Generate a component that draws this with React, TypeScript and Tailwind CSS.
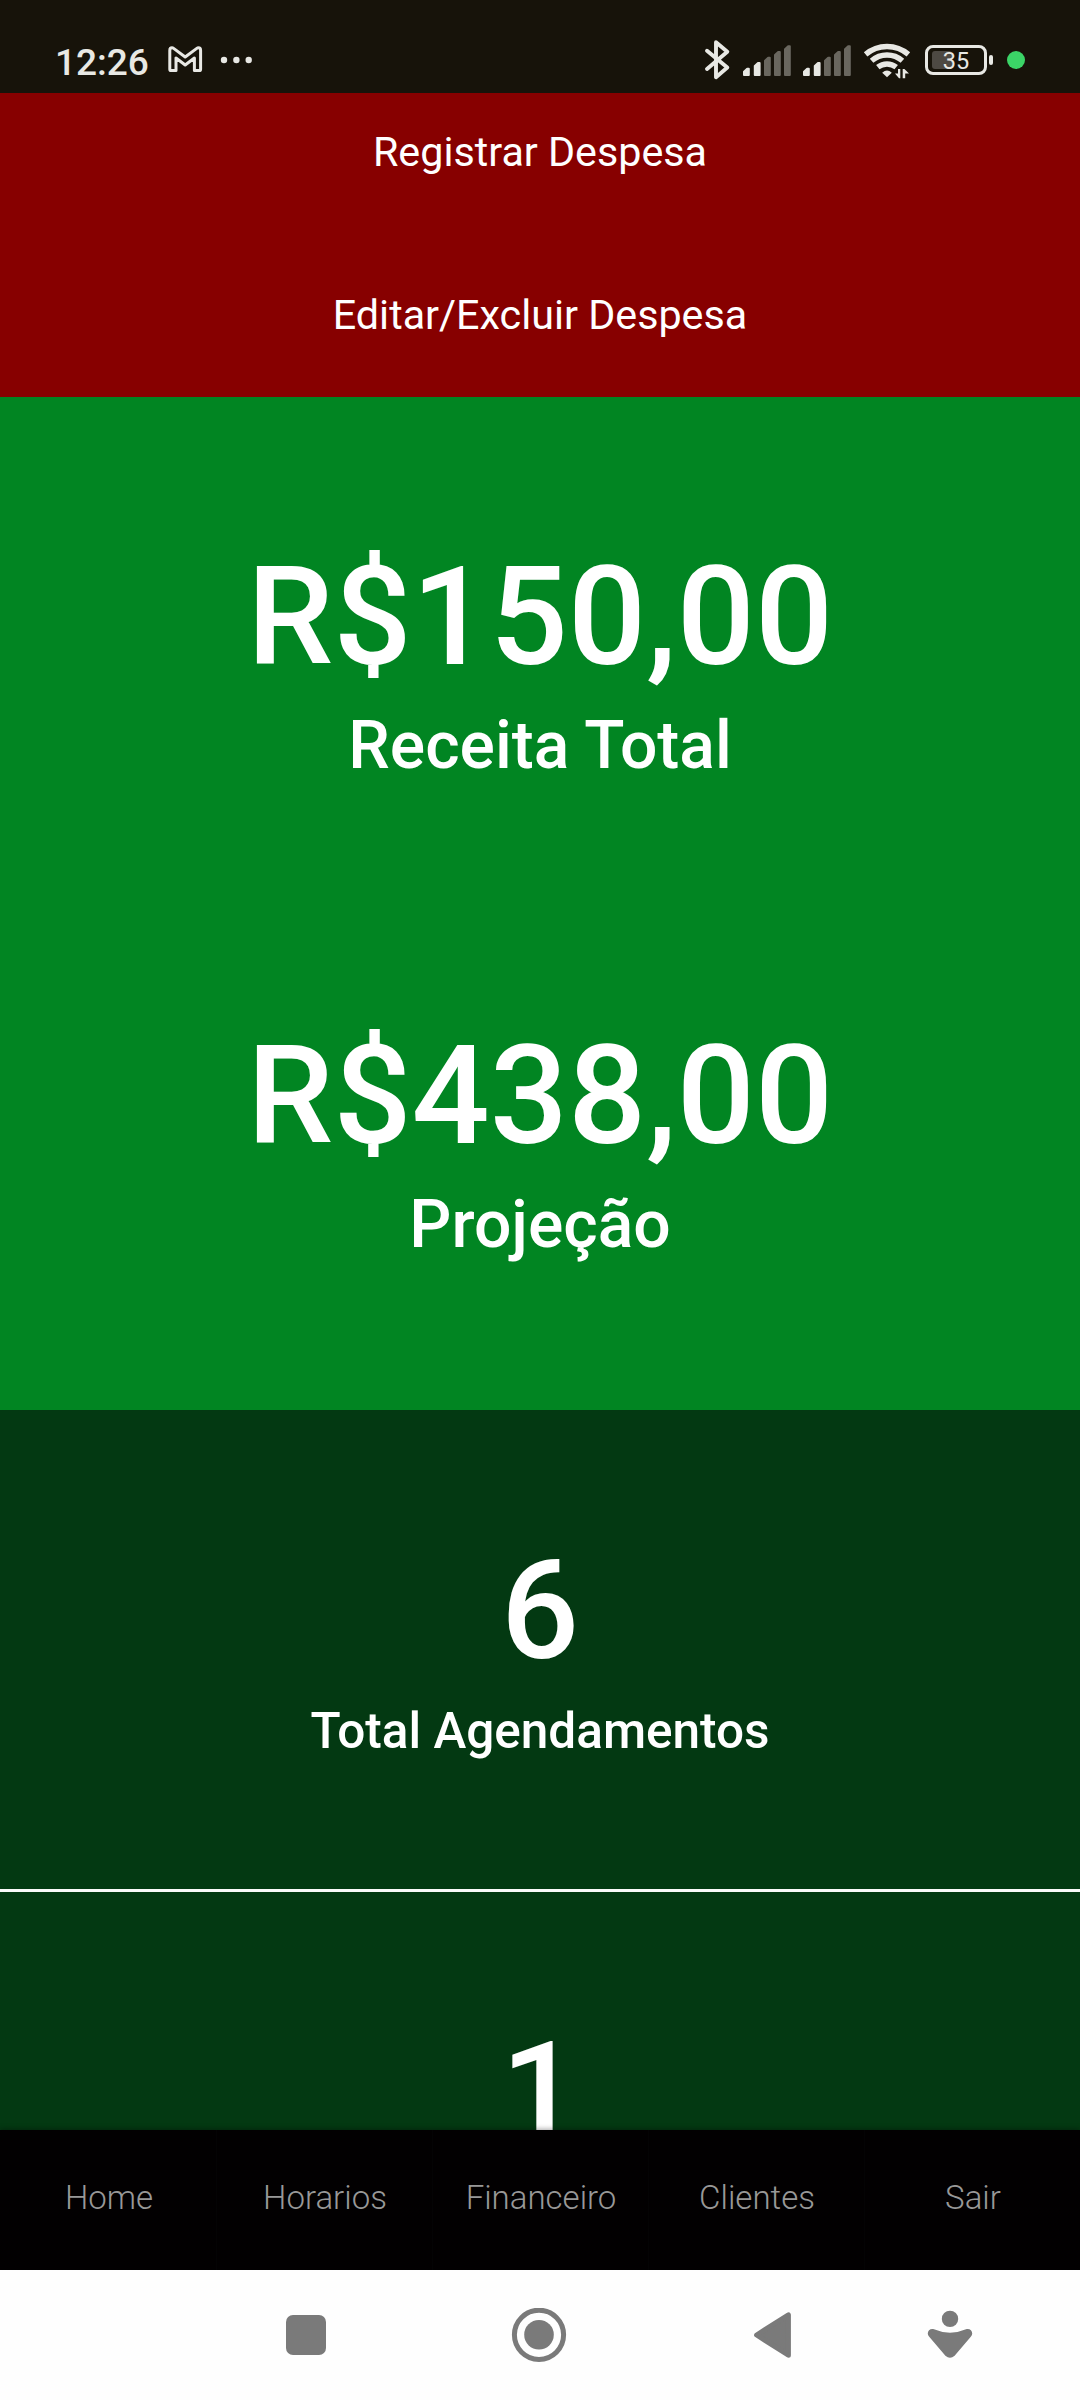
const ICON = '#e8e8e4';
const DIM = '#6a675f';

// Status bar icons share one vertical band (y 40..80) so they line up in the row.
function MailIcon() {
  return (
    <svg className="ml-[16px] h-10 w-[36px] shrink-0" viewBox="167 40 36 40" fill="none" stroke={ICON} strokeWidth="3" strokeLinejoin="round">
      <path d="M171.2 70.6 Q169.8 70.6 169.8 69.2 V50.4 Q169.8 47.8 172 47.8 Q172.8 47.8 173.6 48.4 L185.2 57 L196.8 48.4 Q197.6 47.8 198.4 47.8 Q200.6 47.8 200.6 50.4 V69.2 Q200.6 70.6 199.2 70.6 H194.4 V58 L185.2 65 L176 58 V70.6 Z" />
    </svg>
  );
}

function MoreDots() {
  return (
    <svg className="ml-[17px] h-10 w-[34px] shrink-0" viewBox="220 40 34 40" fill={ICON}>
      <circle cx="224" cy="60" r="3.2" />
      <circle cx="236.4" cy="60" r="3.2" />
      <circle cx="248.7" cy="60" r="3.2" />
    </svg>
  );
}

function BluetoothIcon() {
  return (
    <svg className="h-10 w-[28px] shrink-0" viewBox="703 40 28 40" fill="none" stroke={ICON} strokeWidth="3.9" strokeLinecap="round" strokeLinejoin="round">
      <path d="M707 50.8 L727.3 67.6 L716 77.2 V42.2 L727.3 51.8 L707 69" />
    </svg>
  );
}

const BARS = [
  { x: 0, top: 67.5 },
  { x: 10.8, top: 61.8 },
  { x: 21, top: 56.5 },
  { x: 31, top: 50.8 },
  { x: 41, top: 45 },
];

function SignalIcon() {
  return (
    <svg className="ml-[12px] h-10 w-[48px] shrink-0" viewBox="0 40 48 40" strokeWidth="2" strokeLinejoin="round">
      {BARS.map((b, i) => (
        <path
          key={b.x}
          d={`M${b.x + 1} ${b.top + 4.2} L${b.x + 4.2} ${b.top + 1.2} H${b.x + 5.8} V75 H${b.x + 1} Z`}
          fill={i < 2 ? ICON : DIM}
          stroke={i < 2 ? ICON : DIM}
        />
      ))}
    </svg>
  );
}

function WifiIcon() {
  return (
    <svg className="ml-[12px] h-10 w-[48px] shrink-0" viewBox="863 40 48 40" fill="none" stroke={ICON} strokeWidth="5.4">
      <path d="M865.6 54.4 A32.8 32.8 0 0 1 908.4 54.4" />
      <path d="M871.6 60.8 A23.4 23.4 0 0 1 902.4 60.8" />
      <path d="M877.8 67.2 A14.6 14.6 0 0 1 896.2 67.2" />
      <path d="M882.2 72.8 Q887 68.4 891.8 72.8 L887 77.2 Z" fill={ICON} stroke="none" />
      <path d="M898 69 H900.3 V78.3 H899 L895 73.6 H898 Z" fill={ICON} stroke="none" />
      <path d="M905.2 78.3 H902.7 V69 H904.4 L909 73.6 H905.2 Z" fill={ICON} stroke="none" />
    </svg>
  );
}

function BatteryIcon() {
  return (
    <div className="ml-[14px] mt-[5px] flex shrink-0 items-center gap-[2px]">
      <div className="relative flex h-[30px] w-[62px] items-center justify-center rounded-[8px] border-3 border-[#e8e8e4]">
        <div className="absolute left-[4px] top-[3px] h-[18px] w-[20px] rounded-[3px] bg-[#4d4943]" />
        <span className="relative top-px text-[23.5px] leading-[24px] text-[#e8e8e4]">35</span>
      </div>
      <div className="h-[10px] w-[4px] rounded-[2px] bg-[#e8e8e4]" />
    </div>
  );
}

function StatusBar() {
  return (
    <header className="flex h-[93px] shrink-0 items-start bg-[#17130a] pt-10">
      <span className="mt-px ml-[55px] w-[96px] text-[37px] leading-[44px] font-medium whitespace-nowrap text-[#e8e8e4]">12:26</span>
      <MailIcon />
      <MoreDots />
      <div className="ml-auto flex items-start">
        <BluetoothIcon />
        <SignalIcon />
        <SignalIcon />
        <WifiIcon />
        <BatteryIcon />
        <div className="mt-[11px] mr-[55px] ml-[14px] size-[18px] rounded-full bg-[#3bd467]" />
      </div>
    </header>
  );
}

function Expenses() {
  return (
    <section className="flex h-[304px] shrink-0 flex-col items-center gap-[115px] bg-[#870000] pt-[35px] text-[41.25px] leading-[48px]">
      <button>Registrar Despesa</button>
      <button>Editar/Excluir Despesa</button>
    </section>
  );
}

function RevenueCard({ value, label }: { value: string; label: string }) {
  return (
    <div className="flex h-[479px] flex-col items-center gap-[9px] pt-[140px] font-medium">
      <p className="text-[137.5px] leading-[160px]">{value}</p>
      <p className="text-[66px] leading-[80px]">{label}</p>
    </div>
  );
}

function CountCard({ value, label }: { value: string; label: string }) {
  return (
    <div className="flex h-[482px] shrink-0 flex-col items-center gap-[10px] border-b-3 border-[#fafafa] pt-[121px] font-medium">
      <p className="text-[137.5px] leading-[160px]">{value}</p>
      <p className="text-[49.5px] leading-[60px]">{label}</p>
    </div>
  );
}

const TABS = ['Home', 'Horarios', 'Financeiro', 'Clientes', 'Sair'];

function TabBar() {
  return (
    <nav className="relative grid h-[140px] shrink-0 grid-cols-5 bg-[#020001] text-[33px] leading-[40px] font-light text-[#989898] shadow-[0_-1px_5px_rgba(0,0,0,0.35)]">
      {TABS.map((t) => (
        <button key={t} className="border-l border-[#040304] pt-[48px] pb-[52px] pl-px first:border-l-transparent">
          {t}
        </button>
      ))}
    </nav>
  );
}

function SystemNav() {
  return (
    <footer className="relative flex h-[130px] shrink-0 items-start bg-[#fefefe] pt-[38px] text-[#7a7a7a]">
      <div className="mt-[7px] ml-[286px] size-[40px] rounded-[7px] bg-current" />
      <svg className="ml-[185px] h-[56px] w-[58px]" viewBox="510 2308 58 56" fill="currentColor">
        <circle cx="538" cy="2334.8" r="24.6" fill="none" stroke="currentColor" strokeWidth="5" />
        <circle cx="538" cy="2334.8" r="14.8" />
      </svg>
      <svg className="ml-[182px] h-[56px] w-[44px]" viewBox="750 2308 44 56" fill="currentColor" stroke="currentColor" strokeWidth="5" strokeLinejoin="round">
        <path d="M755.6 2335 L787.4 2314.8 V2355.2 Z" />
      </svg>
      <svg className="ml-[131px] h-[56px] w-[48px]" viewBox="926 2308 48 56" fill="currentColor">
        <circle cx="950" cy="2318.9" r="8.2" />
        <path d="M934 2329.3 Q950 2336.2 966 2329.3 C970.6 2327.8 974.2 2332.6 971 2336.6 L954.6 2355.8 Q950 2359.8 945.4 2355.8 L929 2336.6 C925.8 2332.6 929.4 2327.8 934 2329.3 Z" />
      </svg>
    </footer>
  );
}

export default function App() {
  return (
    <div className="flex h-[2400px] w-[1080px] flex-col overflow-hidden bg-[#033912] font-['Roboto',sans-serif] text-white">
      <StatusBar />
      <Expenses />
      <section className="h-[1013px] shrink-0 bg-[#018522]">
        <RevenueCard value="R$150,00" label="Receita Total" />
        <RevenueCard value="R$438,00" label="Projeção" />
      </section>
      <section className="flex h-[720px] shrink-0 flex-col overflow-hidden bg-[#033912]">
        <CountCard value="6" label="Total Agendamentos" />
        <div className="flex justify-center pt-[120px] font-medium">
          <p className="text-[137.5px] leading-[160px]">1</p>
        </div>
      </section>
      <TabBar />
      <SystemNav />
    </div>
  );
}
